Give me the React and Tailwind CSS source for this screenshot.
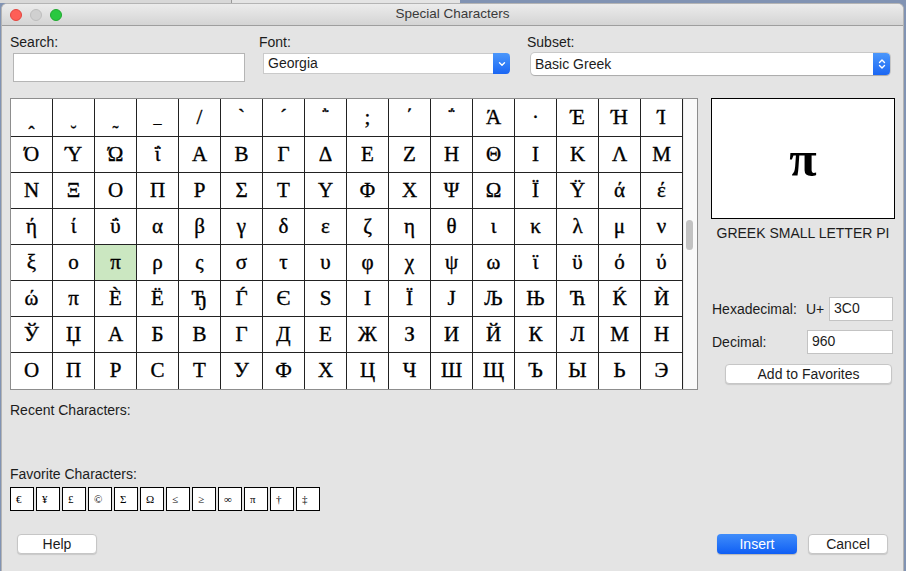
// Special Characters dialog (LibreOffice on macOS)

const rows = [
  ["ˆ", "˘", "˜", "_", "/", "`", "´", "῭", ";", "΄", "΅", "Ά", "·", "Έ", "Ή", "Ί"],
  ["Ό", "Ύ", "Ώ", "ΐ", "Α", "Β", "Γ", "Δ", "Ε", "Ζ", "Η", "Θ", "Ι", "Κ", "Λ", "Μ"],
  ["Ν", "Ξ", "Ο", "Π", "Ρ", "Σ", "Τ", "Υ", "Φ", "Χ", "Ψ", "Ω", "Ϊ", "Ϋ", "ά", "έ"],
  ["ή", "ί", "ΰ", "α", "β", "γ", "δ", "ε", "ζ", "η", "θ", "ι", "κ", "λ", "μ", "ν"],
  ["ξ", "ο", "π", "ρ", "ς", "σ", "τ", "υ", "φ", "χ", "ψ", "ω", "ϊ", "ϋ", "ό", "ύ"],
  ["ώ", "π", "Ѐ", "Ё", "Ђ", "Ѓ", "Є", "Ѕ", "І", "Ї", "Ј", "Љ", "Њ", "Ћ", "Ќ", "Ѝ"],
  ["Ў", "Џ", "А", "Б", "В", "Г", "Д", "Е", "Ж", "З", "И", "Й", "К", "Л", "М", "Н"],
  ["О", "П", "Р", "С", "Т", "У", "Ф", "Х", "Ц", "Ч", "Ш", "Щ", "Ъ", "Ы", "Ь", "Э"],
];

// the spacing accents in the first row sit low in their cells
const nudge = {
  "0-0": "translate-y-[16px] text-[18px]",
  "0-1": "translate-y-[16px] text-[18px]",
  "0-2": "translate-y-[16px] text-[18px]",
  "0-3": "translate-y-[0px] text-[16px]",
};

const favorites = ["€", "¥", "£", "©", "Σ", "Ω", "≤", "≥", "∞", "π", "†", "‡"];

function BlueButton({ double }) {
  return (
    <div className="w-[17px] h-full rounded-r-[4px] bg-linear-to-b from-[#4b97fb] to-[#1b66f3] flex items-center justify-center">
      {double ? (
        <svg width="8" height="12" viewBox="0 0 8 12" fill="none" stroke="white" strokeWidth="1.4" strokeLinecap="round" strokeLinejoin="round">
          <path d="M1.5 4.5L4 2l2.5 2.5" />
          <path d="M1.5 7.5L4 10l2.5-2.5" />
        </svg>
      ) : (
        <svg width="8" height="6" viewBox="0 0 8 6" fill="none" stroke="white" strokeWidth="1.4" strokeLinecap="round" strokeLinejoin="round">
          <path d="M1.5 1.8L4 4.3l2.5-2.5" />
        </svg>
      )}
    </div>
  );
}

function PushButton({ children, primary, className = "" }) {
  return (
    <button
      className={
        primary
          ? `w-[80px] h-[20px] rounded-[4px] bg-linear-to-b from-[#3f8cfa] to-[#0f5ef4] text-white text-[14px] leading-[20px] shadow-[0_1px_1px_rgba(0,0,0,0.2)] ${className}`
          : `w-[80px] h-[20px] rounded-[4px] bg-white border border-[#c6c6c6] text-[14px] leading-[18px] shadow-[0_1px_1px_rgba(0,0,0,0.12)] ${className}`
      }
    >
      {children}
    </button>
  );
}

export default function App() {
  return (
    <div className="w-[906px] h-[571px] bg-[#8193b3] flex flex-col overflow-hidden font-['Liberation_Sans',Arial,sans-serif] text-[14px] text-[#1c1c1c]">
      {/* desktop strip above the window */}
      <div className="h-[3px] flex shrink-0">
        <div className="w-[231px] bg-[#d8d8d8]" />
        <div className="w-px bg-[#9a9a9a]" />
        <div className="w-[228px] bg-[#e4e4e4]" />
        <div className="flex-1 bg-[#8193b3]" />
      </div>

      <div className="flex-1 ml-[1px] mr-[2px] rounded-t-[6px] bg-[#e4e4e4] border border-[#b4b4b4] border-b-0 overflow-hidden flex flex-col">
        {/* title bar */}
        <div className="h-[22px] shrink-0 relative flex items-center bg-linear-to-b from-[#ececec] to-[#d4d4d4] border-b border-[#9e9e9e]">
          <div className="flex items-center gap-[8px] ml-[8px]">
            <div className="w-[12px] h-[12px] rounded-full bg-[#fe5f57] border border-[#e2463f]" />
            <div className="w-[12px] h-[12px] rounded-full bg-[#d0d0d0] border border-[#bdbdbd]" />
            <div className="w-[12px] h-[12px] rounded-full bg-[#2ac840] border border-[#1fa82f]" />
          </div>
          <div className="absolute inset-0 flex items-center justify-center text-[13.5px] text-[#3a3a3a] pointer-events-none">
            Special Characters
          </div>
        </div>

        <div className="flex-1 flex flex-col pt-[8px] pl-[8px]">
          {/* search / font / subset */}
          <div className="flex">
            <div className="w-[249px]">
              <div className="leading-[16px]">Search:</div>
              <div className="mt-[3px] ml-[3px] w-[232px] h-[29px] bg-white border border-[#b5b5b5]" />
            </div>
            <div className="w-[268px]">
              <div className="leading-[16px]">Font:</div>
              <div className="mt-[3px] ml-[4px] w-[247px] h-[21px] flex">
                <div className="flex-1 bg-white border border-[#cacaca] border-r-0 pl-[4px] leading-[19px]">Georgia</div>
                <BlueButton />
              </div>
            </div>
            <div>
              <div className="leading-[16px]">Subset:</div>
              <div className="mt-[3px] ml-[4px] w-[359px] h-[22px] flex rounded-[4px] bg-white shadow-[0_0_0_1px_rgba(0,0,0,0.12),0_1px_1px_rgba(0,0,0,0.15)]">
                <div className="flex-1 pl-[4px] leading-[22px]">Basic Greek</div>
                <BlueButton double />
              </div>
            </div>
          </div>

          {/* character table + detail panel */}
          <div className="flex mt-[16px]">
            <div className="w-[688px] h-[292px] border border-[#8d8d8d] bg-white flex">
              <div className="flex flex-col">
                {rows.map((row, r) => (
                  <div
                    key={r}
                    className={`flex ${r === 0 ? "h-[38px]" : "h-[36px]"} ${r < rows.length - 1 ? "border-b border-[#222]" : ""}`}
                  >
                    {row.map((ch, c) => (
                      <div
                        key={c}
                        className={`w-[42px] h-full border-r border-[#222] flex items-center justify-center font-['Liberation_Serif','DejaVu_Serif',serif] text-[21px] text-black [-webkit-text-stroke:0.35px_black] ${r === 4 && c === 2 ? "bg-[#cbe7c1]" : ""}`}
                      >
                        <span className={nudge[`${r}-${c}`] || ""}>{ch}</span>
                      </div>
                    ))}
                  </div>
                ))}
              </div>
              <div className="flex-1 bg-[#fafafa] border-l border-[#ececec] pt-[121px]">
                <div className="ml-[2px] w-[7px] h-[30px] rounded-full bg-[#c2c2c2]" />
              </div>
            </div>

            <div className="ml-[13px] w-[184px] flex flex-col">
              <div className="h-[121px] bg-white border border-black flex items-center justify-center">
                <span className="font-['Liberation_Serif','DejaVu_Serif',serif] font-bold text-[50px] leading-none text-black">π</span>
              </div>
              <div className="mt-[6px] text-center leading-[16px]">GREEK SMALL LETTER PI</div>

              <div className="mt-[56px] flex items-center h-[24px]">
                <div className="w-[95px] pl-[1px]">Hexadecimal:</div>
                <div className="w-[23px]">U+</div>
                <div className="w-[64px] h-[24px] bg-white border border-[#c3c3c3] pl-[4px] leading-[20px]">3C0</div>
              </div>
              <div className="mt-[9px] flex items-center h-[24px]">
                <div className="w-[96px] pl-[1px]">Decimal:</div>
                <div className="w-[86px] h-[24px] bg-white border border-[#c3c3c3] pl-[4px] leading-[20px]">960</div>
              </div>
              <button className="mt-[10px] ml-[14px] w-[167px] h-[20px] rounded-[4px] bg-white border border-[#c6c6c6] leading-[18px] text-[14px] shadow-[0_1px_1px_rgba(0,0,0,0.12)]">
                Add to Favorites
              </button>
            </div>
          </div>

          {/* recent and favorites */}
          <div className="mt-[12px] leading-[16px]">Recent Characters:</div>
          <div className="mt-[48px] leading-[16px]">Favorite Characters:</div>
          <div className="mt-[5px] flex gap-[2px]">
            {favorites.map((ch) => (
              <div
                key={ch}
                className="w-[24px] h-[24px] bg-white border border-black flex items-center pl-[5px] font-['Liberation_Serif','DejaVu_Serif',serif] text-[11px] text-black"
              >
                {ch}
              </div>
            ))}
          </div>

          {/* dialog buttons */}
          <div className="mt-[23px] flex items-center">
            <PushButton className="ml-[7px]">Help</PushButton>
            <div className="flex-1" />
            <PushButton primary>Insert</PushButton>
            <PushButton className="ml-[11px] mr-[15px]">Cancel</PushButton>
          </div>
        </div>
      </div>
    </div>
  );
}
